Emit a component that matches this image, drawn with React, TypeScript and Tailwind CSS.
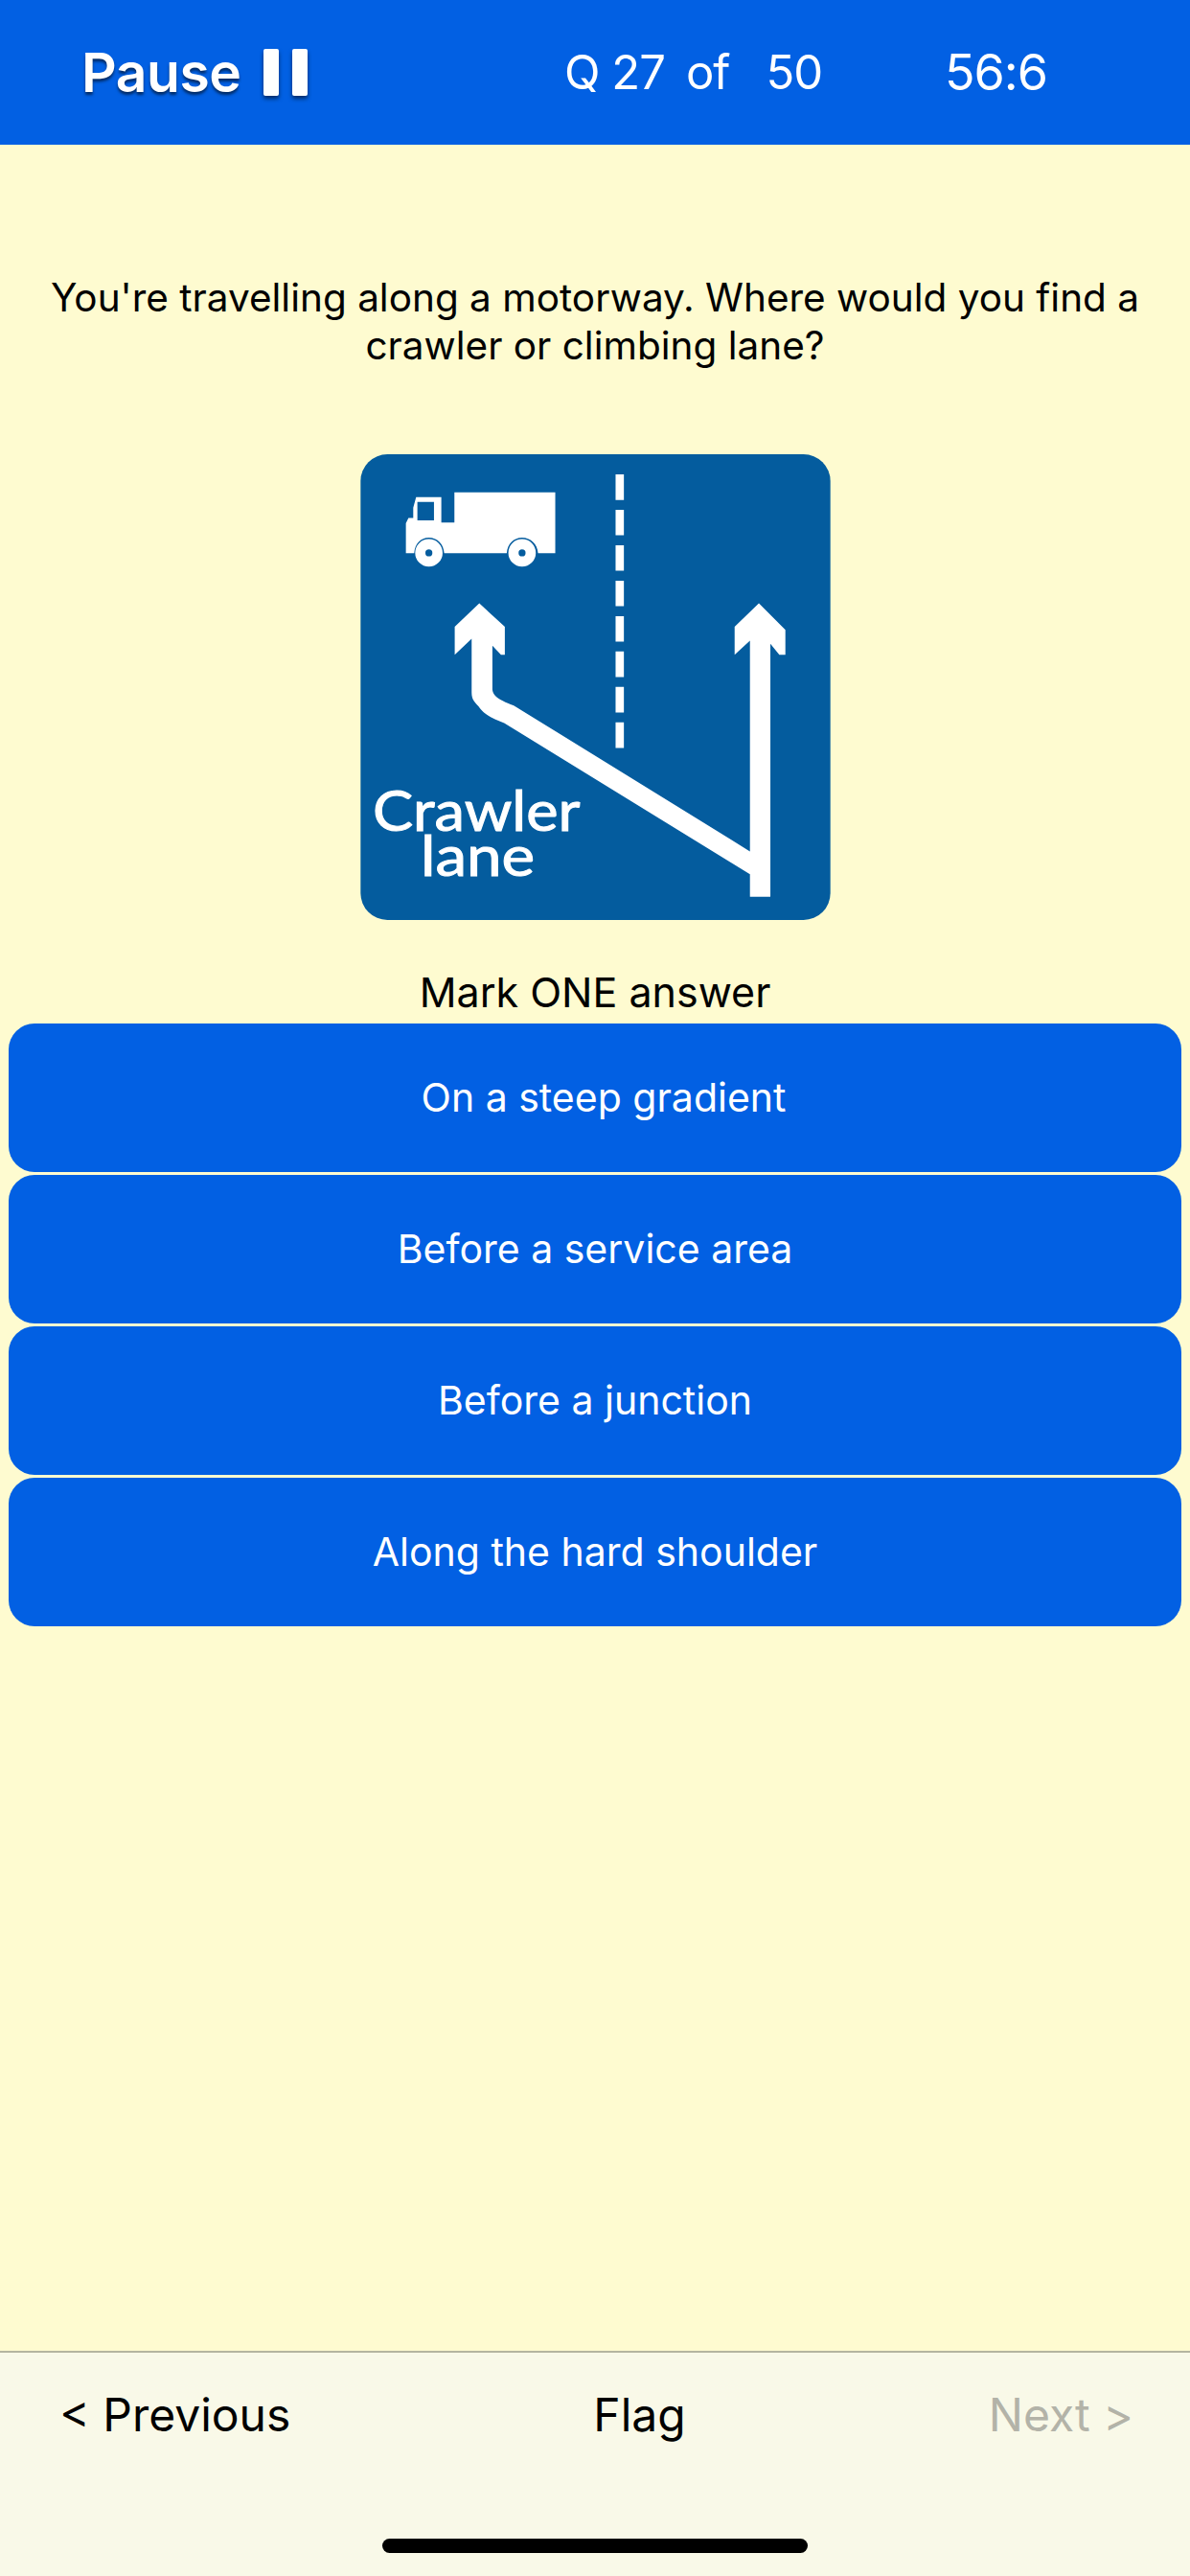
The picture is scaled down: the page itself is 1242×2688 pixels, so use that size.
import React from "react";

const answers = [
  { label: "On a steep gradient", nudge: "pl-[18px]" },
  { label: "Before a service area", nudge: "" },
  { label: "Before a junction", nudge: "" },
  { label: "Along the hard shoulder", nudge: "" },
];

const CrawlerSign = () => (
  <svg viewBox="50 38 1472 1459" className="w-[491px] h-[486px] block">
    <rect x="50" y="38" width="1472" height="1459" rx="84" fill="#045c9e" />
    {/* lorry */}
    <path
      fill="#fff"
      fillRule="evenodd"
      d="M192 348V254L200 238H215V205L224 172H303V252H344V157H660V348H606C604 318 582 299 556 299C530 299 510 318 508 348H312C310 318 290 299 264 299C238 299 220 318 218 348ZM228 187V245H280V187Z"
    />
    <circle cx="264" cy="347" r="27" fill="none" stroke="#fff" strokeWidth="32" />
    <circle cx="556" cy="347" r="27" fill="none" stroke="#fff" strokeWidth="32" />
    {/* centre line */}
    <path
      stroke="#fff"
      strokeWidth="26"
      strokeDasharray="80 31"
      d="M862 101V967"
    />
    {/* lane arrows */}
    <path
      fill="#fff"
      d="M1298 505L1381 588V666H1362L1334 632V1424H1270V1354L500 880C470 868 440 855 425 835C410 815 398 810 398 785V616L345 666V578L422 505L502 578V666H490L463 638V775C465 792 476 805 530 825L1270 1282V622L1222 666V578Z"
    />
    <text
      x="88"
      y="1218"
      fill="#fff"
      stroke="#fff"
      strokeWidth="3"
      fontSize="172"
      textLength="650"
      lengthAdjust="spacingAndGlyphs"
      fontFamily="Lato, sans-serif"
    >
      Crawler
    </text>
    <text
      x="238"
      y="1360"
      fill="#fff"
      stroke="#fff"
      strokeWidth="3"
      fontSize="172"
      textLength="358"
      lengthAdjust="spacingAndGlyphs"
      fontFamily="Lato, sans-serif"
    >
      lane
    </text>
  </svg>
);

export default function App() {
  return (
    <div className="w-[1242px] h-[2688px] flex flex-col bg-[#fefbd0] font-['Inter',sans-serif] text-black">
      <header className="h-[151px] bg-[#0260e3] flex items-center text-white leading-none">
        <div className="w-[589px] pl-[85px] flex items-center gap-[24px]">
          <span className="font-semibold text-[57px] tracking-[-0.5px] [text-shadow:0_3px_3px_rgba(0,0,0,0.55)]">
            Pause
          </span>
          <span className="flex gap-[14px] drop-shadow-[0_3px_2px_rgba(0,0,0,0.55)]">
            <span className="w-[16px] h-[49px] rounded-[2px] bg-white" />
            <span className="w-[16px] h-[49px] rounded-[2px] bg-white" />
          </span>
        </div>
        <div className="w-[397px] flex text-[49px] tracking-[-1px]">
          <span>Q 27</span>
          <span className="ml-[22px]">of</span>
          <span className="ml-[38px]">50</span>
        </div>
        <div className="text-[52px] tracking-[-1px]">56:6</div>
      </header>

      <main className="flex-1 flex flex-col items-center pt-[135px]">
        <p className="w-[1180px] text-center text-[40.5px] leading-[50px]">
          You're travelling along a motorway. Where would you find a crawler or climbing lane?
        </p>
        <div className="mt-[88px]">
          <CrawlerSign />
        </div>
        <p className="mt-[50px] text-[43px] leading-[50px] text-center">Mark ONE answer</p>
        <div className="mt-[8px] w-[1224px] flex flex-col gap-[3px]">
          {answers.map((a) => (
            <button
              key={a.label}
              className={`h-[155px] rounded-[27px] bg-[#0260e3] text-white text-[41px] flex items-center justify-center ${a.nudge}`}
            >
              {a.label}
            </button>
          ))}
        </div>
      </main>

      <footer className="h-[235px] bg-[#f9f9e8] border-t-[2px] border-[#b5b5a0] relative">
        <div className="flex items-center justify-between h-[74px] mt-[28px] pl-[62px] pr-[59px] text-[48px]">
          <span className="w-[510px] whitespace-nowrap">&lt; Previous</span>
          <span>Flag</span>
          <span className="w-[420px] text-right text-[#b3b3a8] whitespace-nowrap">Next &gt;</span>
        </div>
        <div className="absolute left-[399px] top-[194px] w-[444px] h-[15px] rounded-[8px] bg-black" />
      </footer>
    </div>
  );
}
